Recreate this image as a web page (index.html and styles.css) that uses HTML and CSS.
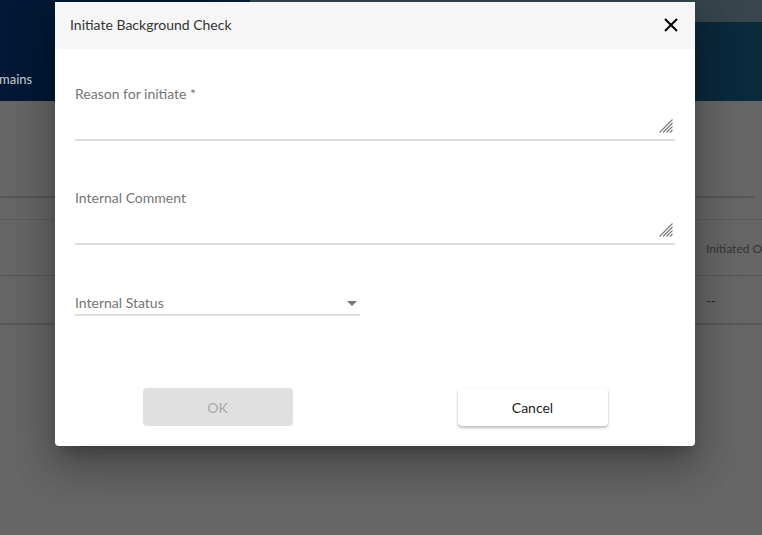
FILE: index.html
```html
<!DOCTYPE html>
<html>
<head>
<meta charset="utf-8">
<link rel="stylesheet" href="styles.css">
</head>
<body>
<div class="page">
  <header class="topbar">
    <div class="topstrip"></div>
    <div class="nav"><span class="navitem">mains</span></div>
  </header>
  <main class="content">
    <div class="rule1"></div>
    <div class="thead"><span class="th">Initiated O</span></div>
    <div class="trow"><span class="td">--</span></div>
  </main>
</div>
<div class="overlay"></div>
<div class="modal">
  <div class="modal-head">
    <span class="modal-title">Initiate Background Check</span>
    <svg class="close" width="14" height="14" viewBox="0 0 14 14"><path d="M1 1L13 13M13 1L1 13" stroke="#000" stroke-width="2"/></svg>
  </div>
  <div class="modal-body">
    <div class="field">
      <label class="label">Reason for initiate *</label>
      <div class="textarea">
        <svg class="grip" width="14" height="14" viewBox="0 0 14 14"><path d="M13.5 0.5L0.5 13.5M13.5 4L4 13.5M13.5 7.5L7.5 13.5M13.5 11L11 13.5" stroke="#7a7a7a" stroke-width="1.1"/></svg>
      </div>
    </div>
    <div class="field">
      <label class="label">Internal Comment</label>
      <div class="textarea">
        <svg class="grip" width="14" height="14" viewBox="0 0 14 14"><path d="M13.5 0.5L0.5 13.5M13.5 4L4 13.5M13.5 7.5L7.5 13.5M13.5 11L11 13.5" stroke="#7a7a7a" stroke-width="1.1"/></svg>
      </div>
    </div>
    <div class="field select">
      <div class="select-row">
        <span class="label">Internal Status</span>
        <svg class="caret" width="10" height="5" viewBox="0 0 10 5"><path d="M0 0H10L5 5Z" fill="#757575"/></svg>
      </div>
    </div>
    <div class="actions">
      <button class="btn btn-ok">OK</button>
      <button class="btn btn-cancel">Cancel</button>
    </div>
  </div>
</div>
</body>
</html>
```

FILE: styles.css
```css
* { box-sizing: border-box; }
html, body { margin: 0; padding: 0; }
body {
  width: 762px;
  height: 535px;
  overflow: hidden;
  font-family: "Lato", "Noto Sans", sans-serif;
  background: #666666;
  position: relative;
}
.page { width: 762px; height: 535px; display: flex; flex-direction: column; }
.topbar {
  height: 101px;
  background: linear-gradient(90deg, #021834 0%, #061f3a 40%, #0b2a3c 100%);
  display: flex;
  flex-direction: column;
}
.topstrip {
  height: 22px;
  margin-left: 250px;
  background: #37454d;
}
.nav { flex: 1; display: flex; align-items: flex-end; padding-bottom: 14px; }
.navitem { color: #c9ced6; font-size: 13px; margin-left: -1px; }
.content { flex: 1; background: #666666; display: flex; flex-direction: column; }
.rule1 { height: 2px; background: #565656; margin-top: 95px; margin-right: 7px; }
.thead {
  margin-top: 21px;
  height: 57px;
  border-top: 1px solid #5c5c5c;
  border-bottom: 1px solid #575757;
  display: flex;
  align-items: center;
  padding-left: 706px;
  padding-top: 2px;
}
.th { font-size: 12px; color: #343434; white-space: nowrap; }
.trow {
  height: 49px;
  border-bottom: 2px solid #575757;
  display: flex;
  align-items: center;
  padding-left: 706px;
  padding-top: 2px;
}
.td { font-size: 13px; color: #222; }
.overlay {
  position: absolute;
  inset: 0;
  background: transparent;
}
.modal {
  position: absolute;
  left: 55px;
  top: 2px;
  width: 640px;
  height: 444px;
  background: #fff;
  border-radius: 0 0 4px 4px;
  box-shadow: 0 11px 15px -7px rgba(0,0,0,.25), 0 24px 38px 3px rgba(0,0,0,.16), 0 9px 46px 8px rgba(0,0,0,.14);
  display: flex;
  flex-direction: column;
}
.modal-head {
  height: 47px;
  background: #f6f6f6;
  display: flex;
  align-items: center;
  justify-content: space-between;
  padding: 0 17px 3px 15px;
}
.modal-title { font-size: 14px; color: #333; }
.close { display: block; margin-top: 1px; }
.modal-body {
  flex: 1;
  padding: 35px 20px 20px 20px;
  display: flex;
  flex-direction: column;
}
.field { display: flex; flex-direction: column; }
.field + .field { margin-top: 47px; }
.label { font-size: 14px; line-height: 20px; color: #757575; }
.textarea {
  height: 37px;
  border-bottom: 2px solid #dddddd;
  position: relative;
}
.grip { position: absolute; right: 2px; bottom: 6px; }
.field.select { width: 285px; }
.select-row {
  display: flex;
  align-items: center;
  justify-content: space-between;
  height: 24px;
  border-bottom: 2px solid #dddddd;
  padding-right: 3px;
  padding-bottom: 1px;
}
.caret { display: block; margin-top: 2px; }
.actions {
  margin-top: auto;
  display: flex;
  justify-content: center;
  gap: 165px;
}
.btn {
  width: 150px;
  height: 38px;
  border: none;
  border-radius: 4px;
  font-family: "Lato", "Noto Sans", sans-serif;
  font-size: 14px;
}
.btn-ok { background: #e0e0e0; color: #a8a8a8; }
.btn-cancel {
  background: #fff;
  color: #222;
  box-shadow: 0 2px 3px rgba(0,0,0,.25), 0 0 1px rgba(0,0,0,.12);
}
```
